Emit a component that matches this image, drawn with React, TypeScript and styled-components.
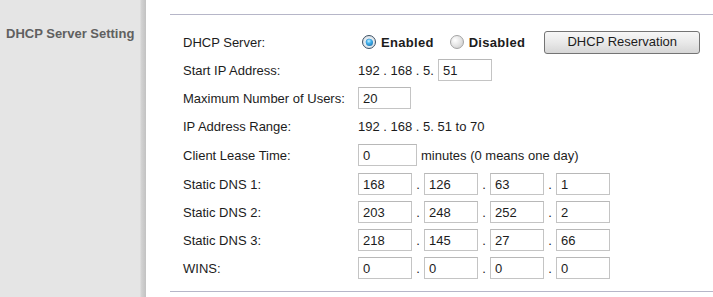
import styled, { createGlobalStyle } from 'styled-components';

const GlobalStyle = createGlobalStyle`
  html, body {
    margin: 0;
    padding: 0;
    background: #fff;
  }
  body {
    font-family: "Liberation Sans", Arial, sans-serif;
    font-size: 13px;
    color: #1c1c1c;
  }
`;

type RowType = {
  tall?: boolean;
}

const dnsRows = [
  { label: 'Static DNS 1:', values: ['168', '126', '63', '1'] },
  { label: 'Static DNS 2:', values: ['203', '248', '252', '2'] },
  { label: 'Static DNS 3:', values: ['218', '145', '27', '66'] },
  { label: 'WINS:', values: ['0', '0', '0', '0'] },
];

const App = () => {
  return (
    <>
      <GlobalStyle />
      <Page>
        <Sidebar>
          <SectionTitle>DHCP Server Setting</SectionTitle>
        </Sidebar>
        <Content>
          <Settings>
            <Row>
              <Label>DHCP Server:</Label>
              <Value>
                <RadioOption>
                  <Radio checked />
                  <RadioText>Enabled</RadioText>
                </RadioOption>
                <RadioOption>
                  <Radio />
                  <RadioText>Disabled</RadioText>
                </RadioOption>
                <Button type="button">DHCP Reservation</Button>
              </Value>
            </Row>
            <Row>
              <Label>Start IP Address:</Label>
              <Value>
                <span>192 . 168 . 5.</span>
                <Field width={54} defaultValue="51" style={{ marginLeft: 4 }} />
              </Value>
            </Row>
            <Row>
              <Label>Maximum Number of Users:</Label>
              <Value>
                <Field width={53} defaultValue="20" />
              </Value>
            </Row>
            <Row>
              <Label>IP Address Range:</Label>
              <Value>192 . 168 . 5. 51 to 70</Value>
            </Row>
            <Row tall>
              <Label>Client Lease Time:</Label>
              <Value>
                <Field width={59} defaultValue="0" />
                <Hint>minutes (0 means one day)</Hint>
              </Value>
            </Row>
            {dnsRows.map(row => (
              <Row key={row.label}>
                <Label>{row.label}</Label>
                <Value>
                  {row.values.map((v, i) => (
                    <Octet key={i}>
                      {i > 0 && <Dot>.</Dot>}
                      <Field width={54} defaultValue={v} />
                    </Octet>
                  ))}
                </Value>
              </Row>
            ))}
          </Settings>
        </Content>
      </Page>
    </>
  );
};

const Page = styled.div`
  display: flex;
  width: 713px;
  height: 297px;
  overflow: hidden;
`;

const Sidebar = styled.div`
  width: 146px;
  flex-shrink: 0;
  background: linear-gradient(to right, #e5e5e5 0, #e5e5e5 140px, #d4d4d4 141px, #c2c2c2 146px);
`;

const SectionTitle = styled.div`
  padding: 26px 0 0 6px;
  font-weight: 700;
  font-size: 13px;
  color: #606060;
  white-space: nowrap;
`;

const Content = styled.div`
  flex: 1;
  padding: 14px 0 0 24px;
`;

const Settings = styled.div`
  border-top: 1px solid #b6b6c8;
  border-bottom: 1px solid #b6b6c8;
  padding: 13px 0 9px 13px;
`;

const Row = styled.div<RowType>`
  display: flex;
  align-items: center;
  height: ${({ tall }) => tall ? '30px' : '28px'};
`;

const Label = styled.div`
  width: 175px;
  flex-shrink: 0;
  white-space: nowrap;
`;

const Value = styled.div`
  display: flex;
  align-items: center;
  white-space: pre;
`;

const RadioOption = styled.label`
  display: flex;
  align-items: center;
  margin-left: 4px;
  margin-right: 12px;
`;

const Radio = styled.span<{ checked?: boolean }>`
  position: relative;
  display: inline-block;
  width: 14px;
  height: 14px;
  box-sizing: border-box;
  border-radius: 50%;
  border: 1px solid ${({ checked }) => checked ? '#3c4f63' : '#a4a4a4'};
  background: ${({ checked }) => checked
    ? 'radial-gradient(circle at 50% 50%, #0f5c99 0, #1a78bf 2.5px, #e6edf2 3.8px, #cfd8df 100%)'
    : 'radial-gradient(circle at 35% 35%, #ffffff 0, #e4e4e4 50%, #c6c6c6 100%)'};
  &::after {
    content: '';
    display: ${({ checked }) => checked ? 'block' : 'none'};
    position: absolute;
    left: 2.5px;
    top: 2.5px;
    width: 7px;
    height: 7px;
    border-radius: 50%;
    background: radial-gradient(circle at 40% 30%, #c8f0ff 0, #44b4ef 35%, #11609f 100%);
  }
`;

const RadioText = styled.span`
  margin-left: 5px;
  font-weight: 700;
  font-size: 13px;
  letter-spacing: 0.3px;
  color: #1c1c1c;
`;

const Button = styled.button`
  margin-left: 7px;
  width: 156px;
  height: 23px;
  padding: 0 0 2px;
  border: 1px solid #747474;
  border-radius: 3px;
  background: linear-gradient(#f7f7f7, #e9e9e9 50%, #d6d6d6);
  font-family: "Liberation Sans", Arial, sans-serif;
  font-size: 13px;
  color: #1c1c1c;
`;

const Field = styled.input<{ width: number }>`
  width: ${({ width }) => width}px;
  height: 22px;
  box-sizing: border-box;
  padding: 1px 4px 0;
  border: 1px solid #c4c4c4;
  border-top-color: #b8b8b8;
  background: #fff;
  font-family: "Liberation Sans", Arial, sans-serif;
  font-size: 13px;
  color: #1c1c1c;
  outline: none;
`;

const Hint = styled.span`
  margin-left: 4px;
`;

const Octet = styled.div`
  display: flex;
  align-items: flex-end;
`;

const Dot = styled.span`
  width: 12px;
  text-align: center;
  line-height: 14px;
  padding-bottom: 3px;
`;

export default App;
